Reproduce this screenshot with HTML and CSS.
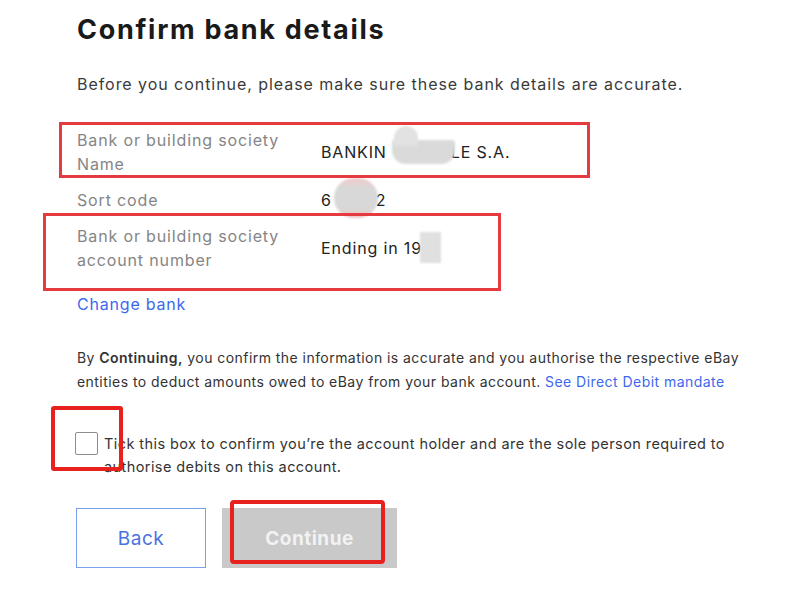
FILE: index.html
```html
<!DOCTYPE html>
<html>
<head>
<meta charset="utf-8">
<link rel="stylesheet" href="styles.css">
</head>
<body>
<div class="page">
  <h1 class="title">Confirm bank details</h1>
  <p class="intro">Before you continue, please make sure these bank details are accurate.</p>

  <div class="details">
    <div class="label">Bank or building society<br>Name</div>
    <div class="value">BANKIN<span class="gap g1"></span>LE S.A.</div>
    <div class="label">Sort code</div>
    <div class="value">6<span class="gap g2"></span>2</div>
    <div class="label">Bank or building society<br>account number</div>
    <div class="value">Ending in 19</div>
  </div>

  <a class="link change" href="#">Change bank</a>

  <p class="legal">By <b>Continuing,</b> you confirm the information is accurate and you authorise the respective eBay entities to deduct amounts owed to eBay from your bank account. <a class="link" href="#">See Direct Debit mandate</a></p>

  <label class="check">
    <span class="box"></span>
    <span class="check-text">Tick this box to confirm you’re the account holder and are the sole person required to authorise debits on this account.</span>
  </label>

  <div class="actions">
    <button class="btn btn-back">Back</button>
    <button class="btn btn-continue">Continue</button>
  </div>

  <div class="mask m1"></div>
  <div class="mask m1b"></div>
  <div class="mask m2"></div>
  <div class="mask m3"></div>

  <div class="mark r1"></div>
  <div class="mark r2"></div>
  <div class="mark r3"></div>
  <div class="mark r4"></div>
</div>
</body>
</html>
```
FILE: styles.css
```css
html, body {
  margin: 0;
  padding: 0;
  background: #fff;
}
body {
  font-family: Inter, "Open Sans", "Liberation Sans", sans-serif;
  color: #333;
  width: 798px;
  height: 590px;
  overflow: hidden;
}
.page {
  position: relative;
  padding: 12px 0 0 77px;
  height: 578px;
  box-sizing: content-box;
}
.title {
  margin: 0;
  font-size: 27px;
  line-height: 36px;
  font-weight: 700;
  color: #1a1a1a;
  letter-spacing: 1.7px;
}
.intro {
  margin: 24px 0 0;
  font-size: 16px;
  line-height: 24px;
  color: #3a3a3a;
  letter-spacing: 0.95px;
}
.details {
  margin-top: 32px;
  display: grid;
  grid-template-columns: 244px auto;
  row-gap: 12px;
  align-items: center;
  font-size: 16px;
  line-height: 24px;
  letter-spacing: 0.85px;
}
.label {
  color: #858585;
}
.value {
  color: #222;
}
.gap {
  display: inline-block;
}
.g1 { width: 64px; }
.g2 { width: 44px; }
.link {
  color: #3d68ee;
  text-decoration: none;
}
.change {
  display: block;
  margin-top: 20px;
  font-size: 16px;
  line-height: 24px;
  letter-spacing: 0.8px;
  width: max-content;
}
.legal {
  margin: 30px 0 0;
  width: 690px;
  font-size: 14px;
  line-height: 24px;
  letter-spacing: 0.45px;
  color: #333;
}
.legal b {
  font-weight: 600;
}
.check {
  margin-top: 38px;
  margin-left: -2px;
  display: flex;
  align-items: flex-start;
  gap: 6px;
  font-size: 14.5px;
  line-height: 23px;
  letter-spacing: 0.42px;
  color: #333;
}
.box {
  flex: none;
  width: 23px;
  height: 23px;
  border: 1.5px solid #8c8c8c;
  border-radius: 2px;
  box-sizing: border-box;
}
.check-text {
  width: 640px;
}
.actions {
  margin-top: 30px;
  margin-left: -1px;
  display: flex;
  gap: 16px;
}
.btn {
  height: 60px;
  font-family: inherit;
  font-size: 19px;
  letter-spacing: 0.5px;
  cursor: pointer;
}
.btn-back {
  width: 130px;
  background: #fff;
  border: 1.5px solid #7aa0f0;
  color: #4a72e0;
}
.btn-continue {
  width: 175px;
  background: #c9c9c9;
  border: none;
  color: #f2f2f2;
  font-weight: 700;
}
.mask {
  position: absolute;
  background: #dadada;
  filter: blur(1px);
}
.m1 {
  left: 392px;
  top: 140px;
  width: 63px;
  height: 24px;
  border-radius: 3px 3px 14px 14px;
}
.m1b {
  left: 394px;
  top: 126px;
  width: 24px;
  height: 20px;
  border-radius: 12px 12px 0 0;
  background: #e2e2e2;
}
.m2 {
  left: 334px;
  top: 178px;
  width: 44px;
  height: 40px;
  border-radius: 20px;
  background: linear-gradient(#f3c9c9, #d8d8d8 25%, #d8d8d8 75%, #f0c3c3);
}
.m3 {
  left: 420px;
  top: 232px;
  width: 21px;
  height: 31px;
  background: #e0e0e0;
}
.mark {
  position: absolute;
  border: 3px solid #e53b40;
  box-sizing: border-box;
}
.r1 {
  left: 59px;
  top: 122px;
  width: 531px;
  height: 56px;
}
.r2 {
  left: 43px;
  top: 213px;
  width: 458px;
  height: 78px;
}
.r3 {
  left: 51px;
  top: 406px;
  width: 72px;
  height: 65px;
  border: 4px solid #e8201e;
  border-radius: 3px;
}
.r4 {
  left: 230px;
  top: 500px;
  width: 155px;
  height: 64px;
  border: 4px solid #e8201e;
  border-radius: 4px;
}
```
